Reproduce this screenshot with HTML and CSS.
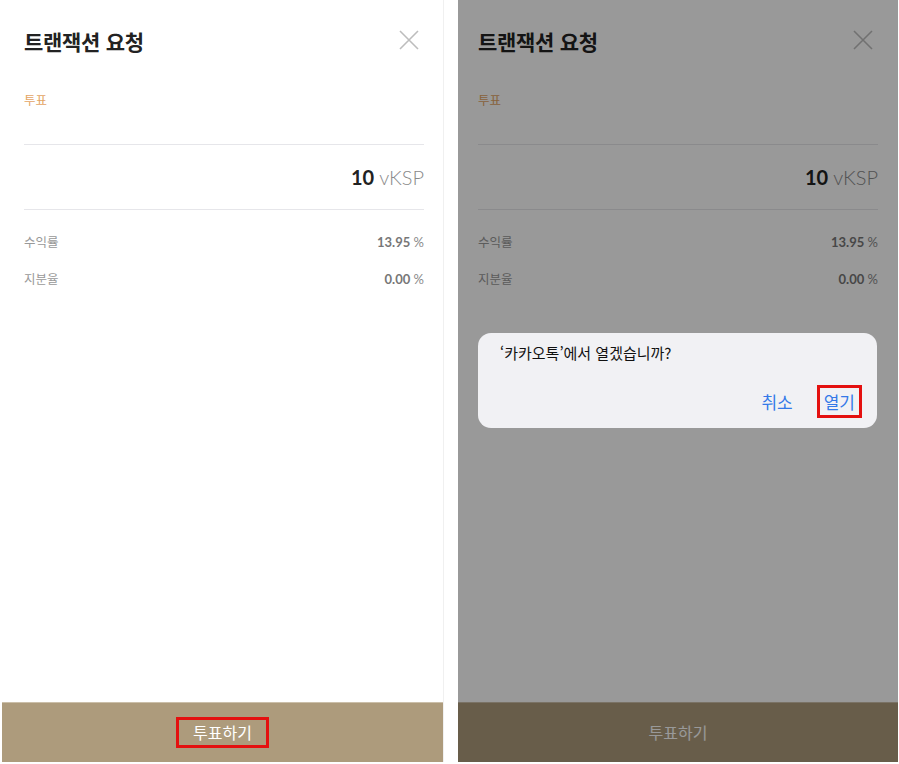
FILE: index.html
```html
<!DOCTYPE html>
<html lang="ko">
<head>
<meta charset="utf-8">
<title>트랜잭션 요청</title>
<link rel="stylesheet" href="styles.css">
</head>
<body>
<div class="page">
  <section class="panel panel--left">
    <header class="head">
      <h1 class="title">트랜잭션 요청</h1>
      <svg class="close" width="20" height="20" viewBox="0 0 20 20"><path d="M1 1L19 19M19 1L1 19" stroke="#bdbdbd" stroke-width="1.6" fill="none"/></svg>
    </header>
    <div class="label">투표</div>
    <div class="divider"></div>
    <div class="amount"><b>10</b> <span class="unit">vKSP</span></div>
    <div class="divider divider--b"></div>
    <div class="row row--first"><span class="rk">수익률</span><span class="rv"><b>13.95</b> %</span></div>
    <div class="row"><span class="rk">지분율</span><span class="rv"><b>0.00</b> %</span></div>
    <div class="cta"><span class="cta-text cta-text--marked">투표하기</span></div>
  </section>

  <section class="panel panel--right">
    <header class="head">
      <h1 class="title">트랜잭션 요청</h1>
      <svg class="close" width="20" height="20" viewBox="0 0 20 20"><path d="M1 1L19 19M19 1L1 19" stroke="#bdbdbd" stroke-width="1.6" fill="none"/></svg>
    </header>
    <div class="label">투표</div>
    <div class="divider"></div>
    <div class="amount"><b>10</b> <span class="unit">vKSP</span></div>
    <div class="divider divider--b"></div>
    <div class="row row--first"><span class="rk">수익률</span><span class="rv"><b>13.95</b> %</span></div>
    <div class="row"><span class="rk">지분율</span><span class="rv"><b>0.00</b> %</span></div>
    <div class="cta"><span class="cta-text">투표하기</span></div>
    <div class="dim"></div>
    <div class="alert">
      <div class="alert-msg">‘카카오톡’에서 열겠습니까?</div>
      <div class="alert-actions">
        <span class="alert-btn">취소</span>
        <span class="alert-btn alert-btn--marked">열기</span>
      </div>
    </div>
  </section>
</div>
</body>
</html>
```

FILE: styles.css
```css
* { box-sizing: border-box; }
html, body { margin: 0; padding: 0; background: #fff; }
body {
  width: 899px;
  height: 764px;
  overflow: hidden;
  font-family: "Noto Sans CJK KR", "Noto Sans", sans-serif;
}
.page {
  display: flex;
  gap: 14px;
  padding-left: 2px;
  height: 762px;
}
.panel {
  position: relative;
  width: 440px;
  height: 762px;
  display: flex;
  flex-direction: column;
  padding: 0 20px;
  background: #fff;
}
.panel--left {
  width: 442px;
  padding-left: 22px;
  padding-right: 19px;
  border-right: 1px solid #f0f0f0;
}
.head {
  display: flex;
  justify-content: space-between;
  align-items: center;
  padding-top: 28px;
  height: 54px;
}
.title {
  margin: 0;
  font-size: 21px;
  line-height: 26px;
  font-weight: 700;
  color: #222;
  letter-spacing: -0.3px;
}
.close { margin-right: 5px; margin-top: -3px; }
.label {
  margin-top: 37px;
  font-size: 12.5px;
  line-height: 18px;
  color: #e3a464;
}
.divider {
  margin-top: 35px;
  height: 1px;
  background: #e6e6ea;
}
.divider--b { margin-top: 18px; }
.amount {
  margin-top: 18px;
  text-align: right;
  font-family: Lato, "Noto Sans", sans-serif;
  font-size: 20px;
  line-height: 28px;
  color: #222;
}
.amount b { font-weight: 700; }
.unit { color: #8a8a8a; font-weight: 300; }
.row {
  display: flex;
  justify-content: space-between;
  margin-top: 19px;
  font-size: 12.5px;
  line-height: 18px;
}
.row--first { margin-top: 23px; }
.rk { color: #999; }
.rv {
  font-family: Lato, "Noto Sans", sans-serif;
  font-size: 13px;
  color: #8a8a8a;
}
.rv b { color: #777; font-weight: 700; }
.cta {
  margin: auto -19px 0 -22px;
  height: 60px;
  background: #ad9b7c;
  display: flex;
  align-items: center;
  justify-content: center;
  border-top: 1px solid #cbbfa9;
}
.panel--right .cta { margin-left: -20px; margin-right: -20px; }
.cta-text {
  font-size: 16px;
  line-height: 25px;
  color: #fff;
  padding: 0 14px;
  border: 3px solid transparent;
}
.cta-text--marked { border-color: #e4100f; }
.dim {
  position: absolute;
  inset: 0;
  background: rgba(0, 0, 0, 0.4);
}
.alert {
  position: absolute;
  left: 20px;
  top: 333px;
  width: 399px;
  height: 95px;
  border-radius: 13px;
  background: #f1f1f4;
  padding: 10px 15px 0 22px;
  display: flex;
  flex-direction: column;
}
.alert-msg {
  font-size: 15px;
  line-height: 20px;
  color: #111;
}
.alert-actions {
  display: flex;
  justify-content: flex-end;
  gap: 17px;
  margin-top: 22px;
}
.alert-btn {
  font-size: 17px;
  line-height: 27px;
  color: #3479e8;
  padding: 0 4px;
  border: 3px solid transparent;
}
.alert-btn--marked { border-color: #e4100f; }
```
